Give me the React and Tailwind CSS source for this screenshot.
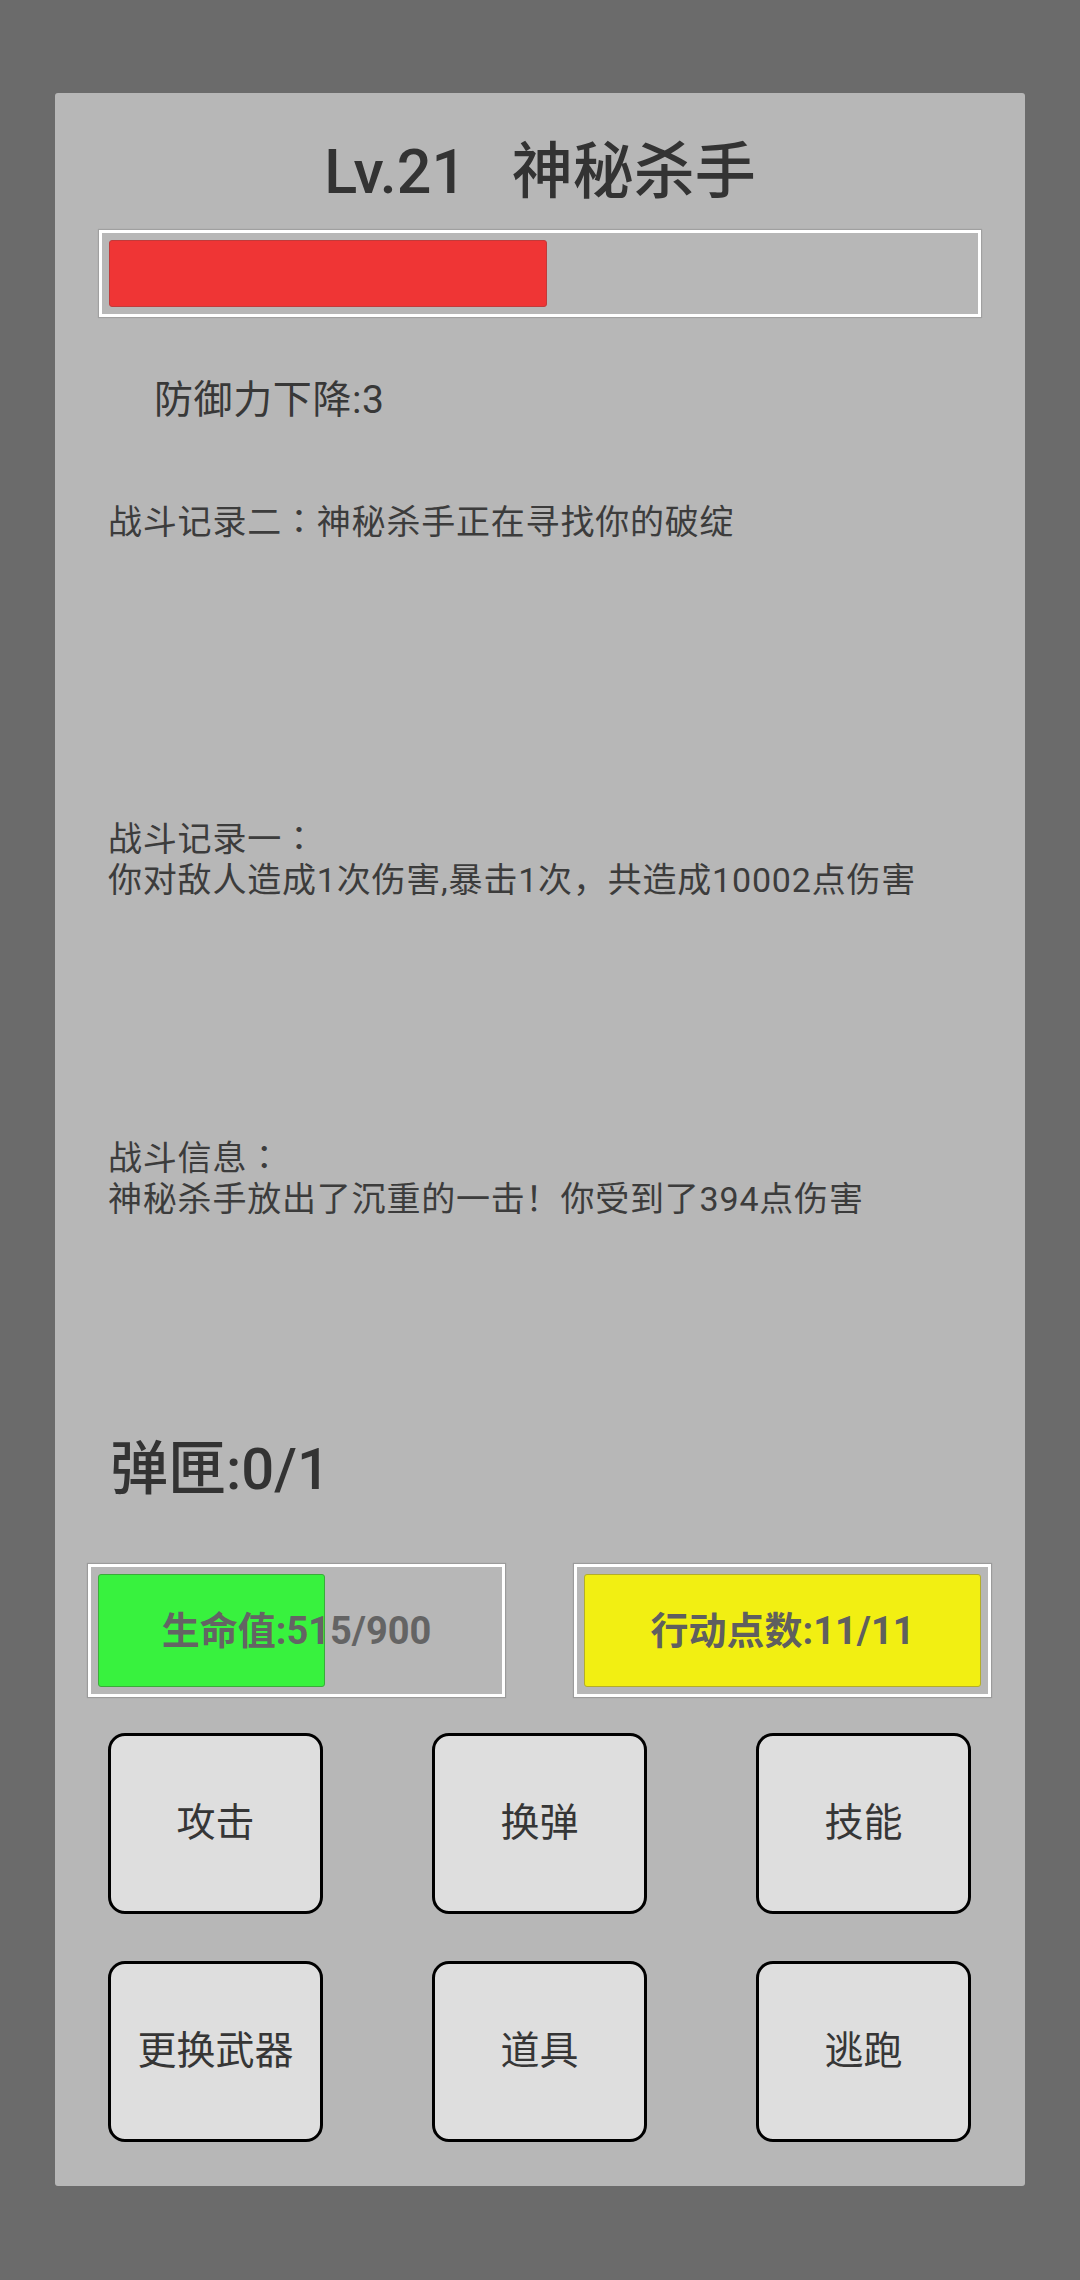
import React from "react";

const font = "font-['Roboto','Noto_Sans_CJK_SC',sans-serif]";

function Colon() {
  return <span className="font-['Noto_Sans_CJK_TC',sans-serif] leading-none">：</span>;
}

function Bar({ fill, fillClass, text, textClass }) {
  return (
    <div className="relative h-[133px] w-[417px] border-[3px] border-white p-[7px] shadow-[0_0_1px_1px_rgba(0,0,0,0.15)]">
      <div
        className={`h-full rounded-[3px] border ${fillClass}`}
        style={{ width: fill }}
      />
      <div
        className={`absolute inset-0 flex items-center justify-center text-[38px] font-bold leading-none ${textClass}`}
      >
        {text}
      </div>
    </div>
  );
}

function Btn({ label }) {
  return (
    <div className="flex h-[181px] w-[215px] items-center justify-center rounded-[17px] border-[3px] border-black bg-[#dedede] text-[39px] text-[#363636]">
      {label}
    </div>
  );
}

function Line({ children }) {
  return <div className="h-[41px] whitespace-nowrap">{children}</div>;
}

export default function App() {
  return (
    <div className={`min-h-[2280px] w-[1080px] bg-[#6b6b6b] pt-[93px] pl-[55px] ${font}`}>
      <div className="flex h-[2093px] w-[970px] flex-col rounded-[3px] bg-[#b7b7b7]">
        {/* Title */}
        <div className="mt-[40px] flex h-[78px] items-center justify-center whitespace-pre text-[61px] font-medium leading-none text-[#333333]">
          {"Lv.21   神秘杀手"}
        </div>

        {/* Enemy HP bar */}
        <div className="mx-[44px] mt-[19px] h-[87px] border-[3px] border-white p-[7px] shadow-[0_0_1px_1px_rgba(0,0,0,0.12)]">
          <div className="h-full w-[438px] rounded-[3px] border border-[#c23a3a] bg-[#ef3535]" />
        </div>

        {/* Debuff */}
        <div className="mt-[60px] flex h-[46px] items-center pl-[99px] text-[39px] tracking-[0.6px] leading-none text-[#383838]">
          防御力下降:3
        </div>

        {/* Log 2 */}
        <div className="mt-[79px] pl-[53px] text-[34px] tracking-[0.8px] leading-[41px] text-[#3c3c3c]">
          <Line>
            战斗记录二<Colon />神秘杀手正在寻找你的破绽
          </Line>
        </div>

        {/* Log 1 */}
        <div className="mt-[276px] pl-[53px] text-[34px] tracking-[0.8px] leading-[41px] text-[#3c3c3c]">
          <Line>
            战斗记录一<Colon />
          </Line>
          <Line>你对敌人造成1次伤害,暴击1次，共造成10002点伤害</Line>
        </div>

        {/* Battle info */}
        <div className="mt-[237px] pl-[53px] text-[34px] tracking-[0.8px] leading-[41px] text-[#3c3c3c]">
          <Line>
            战斗信息<Colon />
          </Line>
          <Line>神秘杀手放出了沉重的一击！你受到了394点伤害</Line>
        </div>

        {/* Magazine */}
        <div className="mt-[214px] flex h-[70px] items-center pl-[55px] text-[58px] font-medium leading-none text-[#333333]">
          弹匣:0/1
        </div>

        {/* Player bars */}
        <div className="mt-[60px] flex justify-between pl-[33px] pr-[34px]">
          <Bar
            fill="227px"
            fillClass="border-[#3aab3a] bg-[#38f23e]"
            text="生命值:515/900"
            textClass="text-[#646464]"
          />
          <Bar
            fill="100%"
            fillClass="border-[#b3ad2a] bg-[#f2ef12]"
            text="行动点数:11/11"
            textClass="text-[#5f5f5f]"
          />
        </div>

        {/* Buttons */}
        <div className="mt-[36px] flex flex-col gap-[47px] pl-[53px] pr-[54px]">
          <div className="flex justify-between">
            <Btn label="攻击" />
            <Btn label="换弹" />
            <Btn label="技能" />
          </div>
          <div className="flex justify-between">
            <Btn label="更换武器" />
            <Btn label="道具" />
            <Btn label="逃跑" />
          </div>
        </div>
      </div>
    </div>
  );
}
